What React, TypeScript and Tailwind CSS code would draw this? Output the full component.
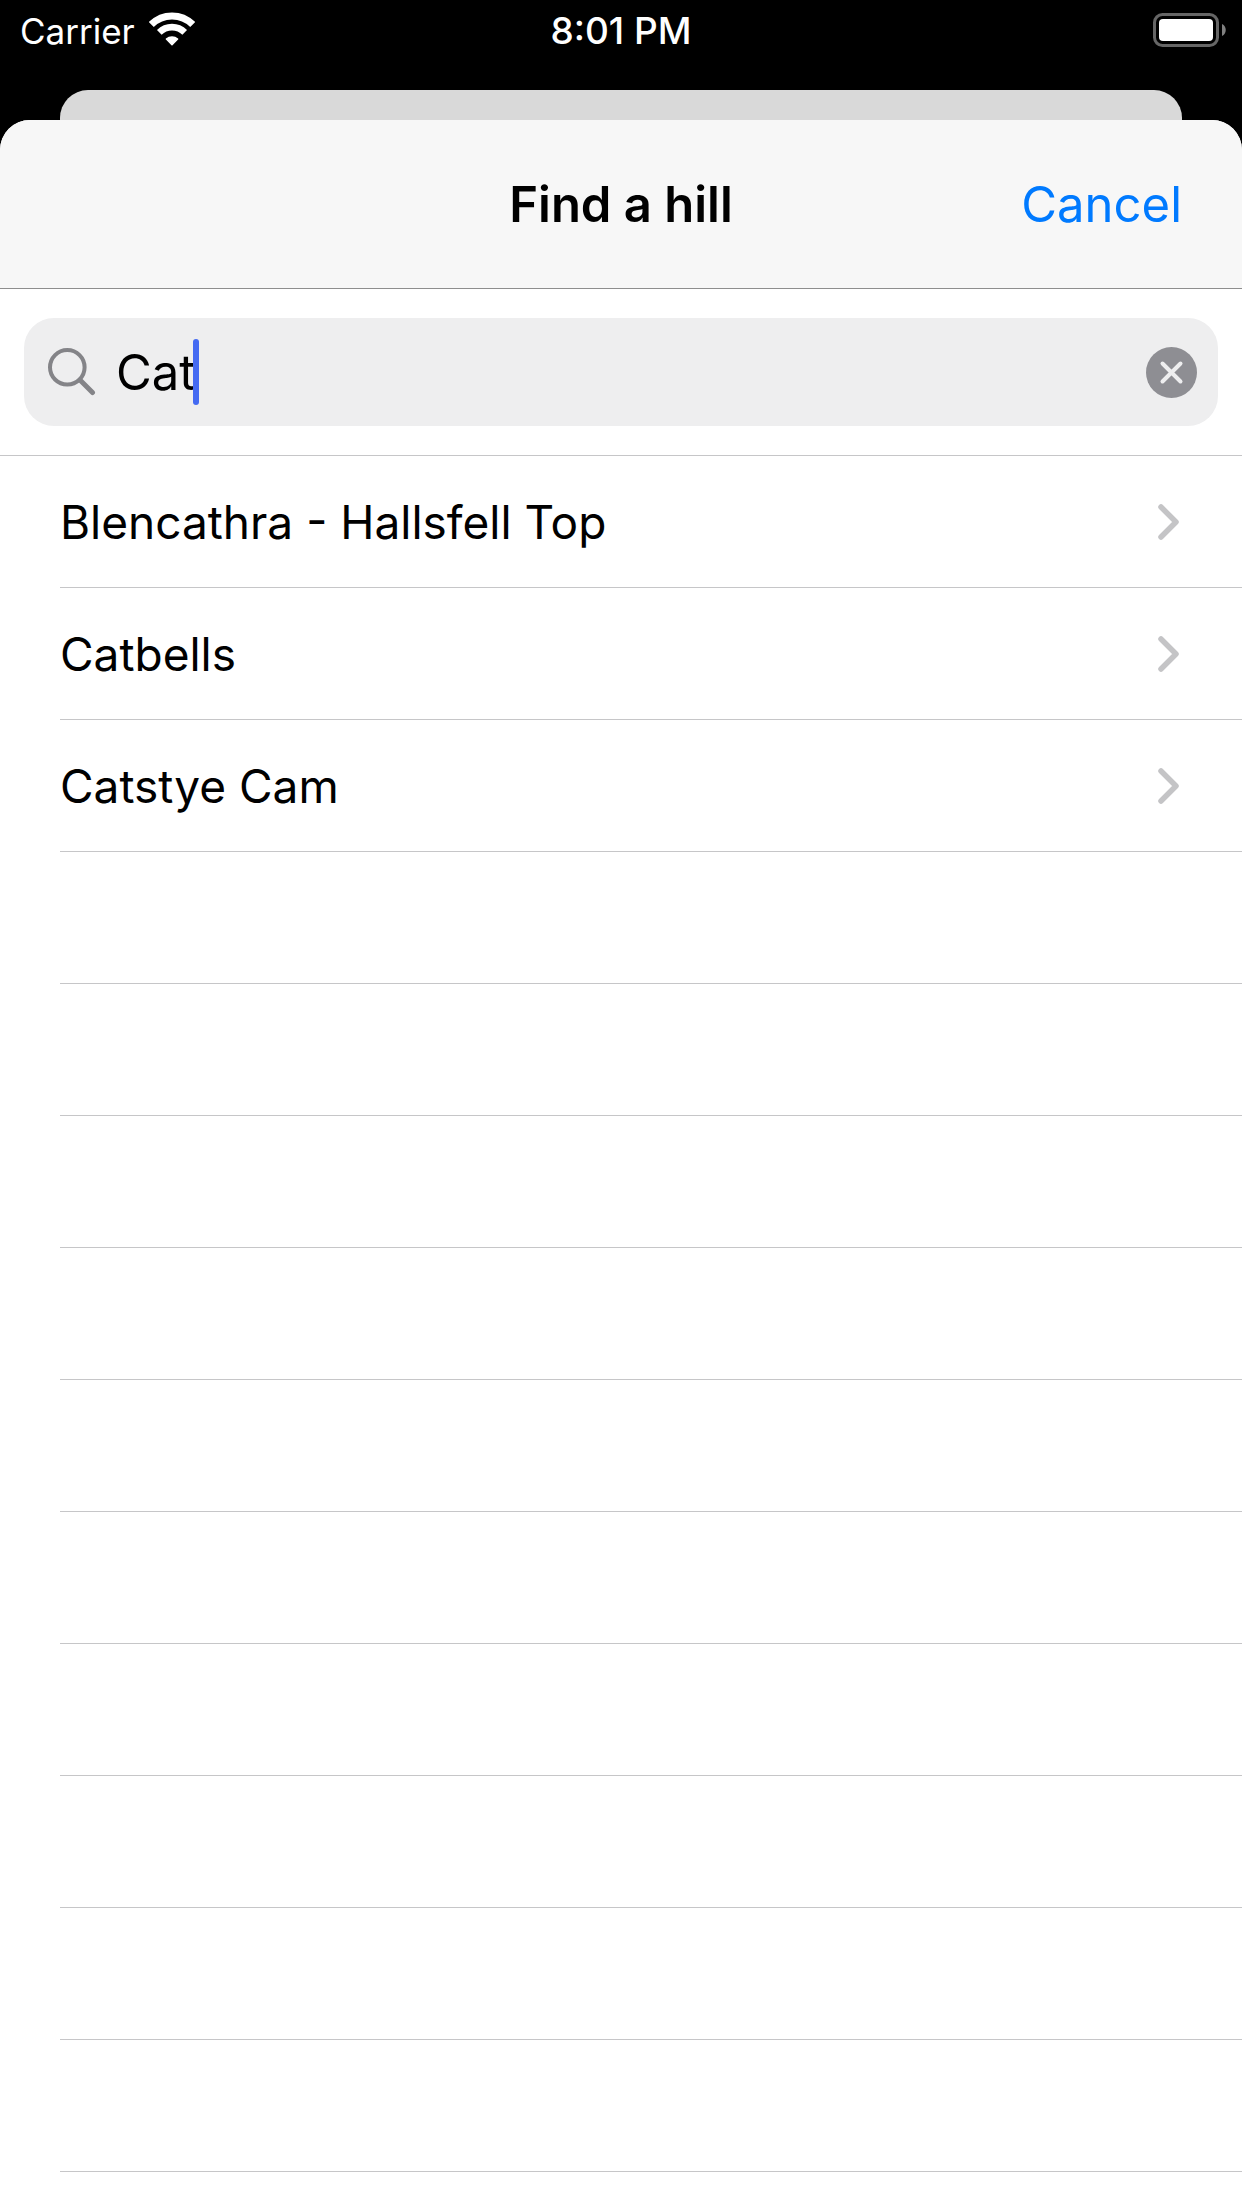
import { useState } from "react";

const HILLS = ["Blencathra - Hallsfell Top", "Catbells", "Catstye Cam"];
const EMPTY_ROWS = 10;

function WifiIcon() {
  return (
    <svg width="46" height="34" viewBox="0 0 46 34" fill="none" aria-hidden="true">
      <path d="M2.3 12.5A29.3 29.3 0 0 1 43.7 12.5" stroke="#fff" strokeWidth="7" />
      <path d="M10.3 20.4A18 18 0 0 1 35.7 20.4" stroke="#fff" strokeWidth="6.6" />
      <path
        d="M23 32.6L17.4 27A8.6 8.6 0 0 1 28.6 27Z"
        fill="#fff"
        stroke="#fff"
        strokeWidth="1.5"
        strokeLinejoin="round"
      />
    </svg>
  );
}

function BatteryIcon() {
  return (
    <svg width="73" height="34" viewBox="0 0 73 34" aria-hidden="true">
      <rect x="1.5" y="1.5" width="63" height="31" rx="8" fill="none" stroke="#666" strokeWidth="3" />
      <rect x="6" y="6" width="54" height="22" rx="4" fill="#fff" />
      <path d="M69 11C74 13 74 21 69 23Z" fill="#808080" />
    </svg>
  );
}

function SearchIcon() {
  return (
    <svg
      width="48"
      height="48"
      viewBox="0 0 48 48"
      fill="none"
      stroke="#848488"
      strokeLinecap="round"
      aria-hidden="true"
    >
      <circle cx="19.3" cy="19.3" r="17.3" strokeWidth="4" />
      <path d="M32 32L44.5 44.5" strokeWidth="5" />
    </svg>
  );
}

function ClearIcon() {
  return (
    <svg width="51" height="51" viewBox="0 0 51 51" fill="none" aria-hidden="true">
      <circle cx="25.5" cy="25.5" r="25.5" fill="#8e8e93" />
      <path d="M16.5 16.5L34.5 34.5M34.5 16.5L16.5 34.5" stroke="#eeeeef" strokeWidth="4" strokeLinecap="round" />
    </svg>
  );
}

function Chevron() {
  return (
    <svg width="22" height="36" viewBox="0 0 22 36" fill="none" aria-hidden="true">
      <path
        d="M3 3L18 18L3 33"
        stroke="#c4c4c6"
        strokeWidth="5.5"
        strokeLinecap="round"
        strokeLinejoin="round"
      />
    </svg>
  );
}

export default function App() {
  const [query, setQuery] = useState("Cat");
  const matches = HILLS.filter((hill) => hill.toLowerCase().includes(query.toLowerCase()));

  return (
    <div className="flex min-h-screen flex-col bg-black font-[Inter,sans-serif] text-black">
      <div className="grid h-[90px] grid-cols-3 items-start px-4 pt-3 text-white">
        <div className="flex items-start gap-3.5 pl-1 text-[35px] leading-[38px]">
          <span>Carrier</span>
          <WifiIcon />
        </div>
        <span className="text-center text-[37px] leading-[38px] font-medium">8:01 PM</span>
        <div className="flex h-9 items-center justify-end">
          <BatteryIcon />
        </div>
      </div>

      <div className="mx-[60px] h-[30px] rounded-t-[28px] bg-[#d9d9d9]" />

      <main className="flex flex-1 flex-col overflow-hidden rounded-t-[30px] bg-white">
        <header className="grid h-[169px] grid-cols-3 items-center border-b border-[#8e8e8e] bg-[#f7f7f7] px-[60px] pt-0.5">
          <h1 className="col-start-2 text-center text-[49px] leading-[60px] font-semibold">Find a hill</h1>
          <button type="button" className="justify-self-end text-[49px] leading-[60px] text-[#007aff]">
            Cancel
          </button>
        </header>

        <search className="border-b border-[#c6c6c8] px-6 py-[29px]">
          <div className="flex h-[108px] items-center rounded-[30px] bg-[#eeeeef] pr-[21px] pl-6">
            <SearchIcon />
            <input
              aria-label="Search hills"
              type="text"
              value={query}
              onChange={(event) => setQuery(event.target.value)}
              className="ml-5 field-sizing-content min-w-1 pt-0.5 text-[49px] leading-[60px] caret-transparent outline-none"
            />
            <span className="z-10 -ml-0.5 h-[66px] w-[6px] rounded-full bg-[#446af2]" />
            <button type="button" aria-label="Clear search" className="ml-auto" onClick={() => setQuery("")}>
              <ClearIcon />
            </button>
          </div>
        </search>

        <ul className="pl-[60px]">
          {matches.map((hill) => (
            <li key={hill} className="border-b border-[#c6c6c8]">
              <button
                type="button"
                className="flex h-[131px] w-full items-center justify-between pr-[62px] text-left text-[46px] leading-[60px]"
              >
                {hill}
                <Chevron />
              </button>
            </li>
          ))}
          {Array.from({ length: EMPTY_ROWS }, (_, index) => (
            <li key={index} aria-hidden="true" className="h-[132px] border-b border-[#c6c6c8]" />
          ))}
        </ul>
      </main>
    </div>
  );
}
